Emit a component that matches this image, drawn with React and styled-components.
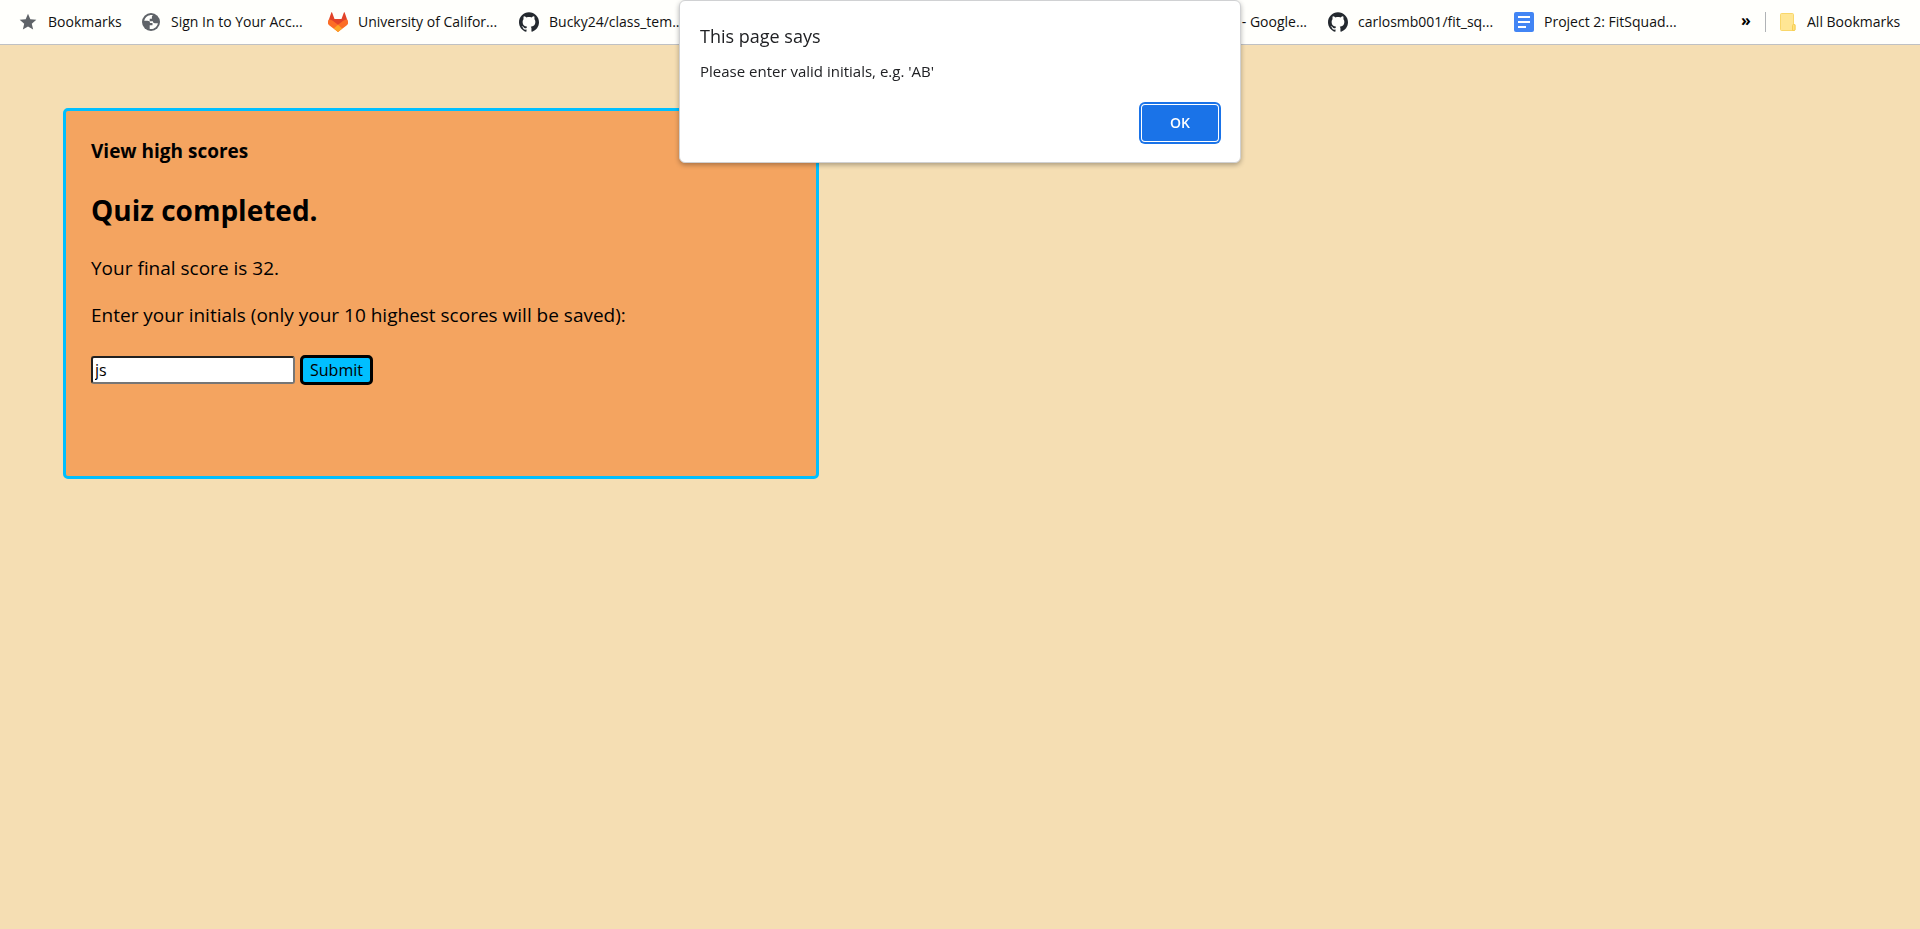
import React from 'react';
import styled, { createGlobalStyle } from 'styled-components';
import { SiGithub } from 'react-icons/si';
import { MdStar } from 'react-icons/md';

const GlobalStyle = createGlobalStyle`
  *, *::before, *::after { box-sizing: border-box; }
  body {
    margin: 0;
    background: wheat;
    color: #000;
    font-family: 'Open Sans', 'Noto Sans', sans-serif;
  }
`;

const BookmarksBar = styled.nav`
  display: flex;
  align-items: center;
  justify-content: space-between;
  height: 45px;
  padding: 0 18px;
  background: #fffffc;
  border-bottom: 1px solid #bfc1c4;
`;

const Group = styled.div`
  display: flex;
  align-items: center;
  gap: 21px;
`;

const Bookmark = styled.a`
  display: flex;
  flex: none;
  align-items: center;
  gap: 10px;
  width: ${(p) => p.$width}px;
  height: 24px;
  color: #111;
  font-size: 14px;
  line-height: 20px;
  text-decoration: none;
  white-space: nowrap;
  justify-content: ${(p) => (p.$end ? 'flex-end' : 'flex-start')};

  svg {
    flex: none;
    display: block;
  }
`;

const Overflow = styled.button`
  width: 20px;
  margin-left: 38px;
  padding: 0 0 4px;
  border: 0;
  background: none;
  color: #000;
  font: 700 16px/20px 'Open Sans', sans-serif;
`;

const Divider = styled.span`
  width: 1px;
  height: 20px;
  margin: 0 -8px 0 -12px;
  background: #b0b3b6;
`;

const Page = styled.main`
  padding: 63px 15px;
`;

const Card = styled.section`
  width: 40%;
  min-width: 600px;
  min-height: 371px;
  margin-left: 48px;
  padding: 27px 25px 25px;
  background: sandybrown;
  border: 3px solid deepskyblue;
  border-radius: 5px;
  font-size: 19px;
  line-height: 27px;
`;

const ScoresLink = styled.a`
  display: block;
  color: #000;
  font-weight: 700;
  text-decoration: none;
`;

const Heading = styled.h2`
  margin: 25px 0;
  font-size: 28px;
  line-height: 40px;
`;

const Text = styled.p`
  margin: 0 0 20px;
`;

const Entry = styled.form`
  display: flex;
  flex-wrap: wrap;
  align-items: center;
  gap: 5px;
`;

const Prompt = styled.label`
  width: 100%;
  margin-bottom: 21px;
`;

const InitialsInput = styled.input`
  width: 204px;
  height: 28px;
  padding: 1px 2px;
  background: #fff;
  border: 2px inset #767676;
  border-radius: 3px;
  color: #000;
  font: 16px/22px 'Open Sans', sans-serif;
  outline: none;
`;

const SubmitButton = styled.button`
  width: 73px;
  height: 30px;
  padding: 0;
  background: deepskyblue;
  border: 3px solid #000;
  border-radius: 5px;
  color: #000;
  font: 16px/24px 'Open Sans', sans-serif;
`;

const Alert = styled.div`
  position: fixed;
  top: 0;
  left: 50%;
  width: 562px;
  padding: 22px 20px 21px;
  transform: translateX(-50%);
  background: #fff;
  border: 1px solid #d0d1d3;
  border-radius: 6px;
  box-shadow: 0 2px 5px rgba(0, 0, 0, 0.3);
  color: #202124;
`;

const AlertTitle = styled.h1`
  margin: 0 0 11px;
  font-size: 18px;
  font-weight: 400;
  line-height: 26px;
`;

const AlertMessage = styled.p`
  margin: 0 0 23px;
  font-size: 15px;
  line-height: 22px;
`;

const AlertActions = styled.div`
  display: flex;
  justify-content: flex-end;
`;

const OkButton = styled.button`
  width: 76px;
  height: 36px;
  margin-right: 2px;
  padding: 0;
  background: #1a73e8;
  border: 0;
  border-radius: 3px;
  box-shadow: 0 0 0 1px #fff, 0 0 0 3px #1a73e8;
  color: #fff;
  font: 600 14px/20px 'Open Sans', sans-serif;
`;

const GlobeIcon = () => (
  <svg width="20" height="20" viewBox="0 0 20 20" aria-hidden="true">
    <circle cx="10" cy="10" r="9" fill="#5f6368" />
    <path
      fill="#fffffc"
      d="M9 3.2c-2.800.4-5.200 2.600-5.800 5.500h3.300c1.600 0 2.500.9 2.500 2.200h2.500v2.400H8.700v3.600c3.900.7 7.600-1.900 8.200-5.700h-3.100c-1.200 0-1.900-.8-1.900-2H8.700V6.700h2.200V4.800c0-.7.500-1.200 1.100-1.300-.9-.3-2-.5-3-.3z"
    />
  </svg>
);

const GitlabIcon = () => (
  <svg width="20" height="20" viewBox="0 0 20 20" aria-hidden="true">
    <path fill="#e24329" d="M3.300.5 1 7.300 0 11l10 8.500L20 11l-1-3.700L16.700.5c-.1-.4-.6-.4-.8 0L13.500 7h-7L4.100.5c-.1-.4-.700-.4-.8 0z" />
    <path fill="#fc6d26" d="M0 11.200c-.1-1.500.2-2.800 1-3.900 2 .4 3.700 1.300 5.400 2.600l3.600 2.800 3.600-2.800C15.300 8.600 17 7.700 19 7.300c.8 1.100 1.100 2.400 1 3.900-.1 1-.7 1.700-1.500 2.300L10 20l-8.500-6.500C.7 12.900.1 12.200 0 11.200z" />
    <path fill="#fca326" d="m5.800 16.400 4.200-3.700 4.200 3.700L10 20z" />
  </svg>
);

const DocsIcon = () => (
  <svg width="20" height="20" viewBox="0 0 20 20" aria-hidden="true">
    <rect width="20" height="20" rx="2" fill="#4285f4" />
    <path fill="#fff" d="M4 4h12v2H4zM4 9h12v2H4zM4 14h8v2H4z" />
  </svg>
);

const FolderIcon = () => (
  <svg width="18" height="20" viewBox="0 0 18 20" aria-hidden="true">
    <path fill="#ffe694" stroke="#f9d76a" d="M2.500 1.500h11c.6 0 1 .4 1 1v10h1.500v5c0 .6-.4 1-1 1H2.500c-.6 0-1-.4-1-1v-15c0-.6.4-1 1-1z" />
    <path fill="#ffe07d" stroke="#f7cf52" d="M13.500 13.500c0-.6.400-1 1-1s1.500.4 1.500 1v4c0 .6-.4 1-1 1h-1.500z" />
  </svg>
);

const GithubIcon = () => <SiGithub size={20} color="#24292f" aria-hidden="true" />;
const StarIcon = () => <MdStar size={20} color="#5f6368" aria-hidden="true" />;

const leftBookmarks = [
  { label: 'Bookmarks', width: 102, Icon: StarIcon },
  { label: 'Sign In to Your Acc...', width: 166, Icon: GlobeIcon },
  { label: 'University of Califor...', width: 170, Icon: GitlabIcon },
  { label: 'Bucky24/class_tem...', width: 170, Icon: GithubIcon },
];

const rightBookmarks = [
  { label: '- Google...', width: 80, end: true },
  { label: 'carlosmb001/fit_sq...', width: 165, Icon: GithubIcon },
  { label: 'Project 2: FitSquad...', width: 163, Icon: DocsIcon },
];

const BookmarkItem = ({ label, width, end, Icon }) => (
  <Bookmark href="#" $width={width} $end={end}>
    {Icon && <Icon />}
    {label}
  </Bookmark>
);

export default function App() {
  return (
    <>
      <GlobalStyle />
      <BookmarksBar aria-label="Bookmarks">
        <Group>
          {leftBookmarks.map((b) => (
            <BookmarkItem key={b.label} {...b} />
          ))}
        </Group>
        <Group>
          {rightBookmarks.map((b) => (
            <BookmarkItem key={b.label} {...b} />
          ))}
          <Overflow type="button" aria-label="More bookmarks">»</Overflow>
          <Divider />
          <BookmarkItem label="All Bookmarks" width={123} Icon={FolderIcon} />
        </Group>
      </BookmarksBar>
      <Page>
        <Card>
          <ScoresLink href="#">View high scores</ScoresLink>
          <Heading>Quiz completed.</Heading>
          <Text>Your final score is 32.</Text>
          <Entry onSubmit={(e) => e.preventDefault()}>
            <Prompt htmlFor="initials">
              Enter your initials (only your 10 highest scores will be saved):
            </Prompt>
            <InitialsInput id="initials" type="text" defaultValue="js" />
            <SubmitButton type="submit">Submit</SubmitButton>
          </Entry>
        </Card>
      </Page>
      <Alert role="alertdialog" aria-labelledby="alert-title" aria-describedby="alert-message">
        <AlertTitle id="alert-title">This page says</AlertTitle>
        <AlertMessage id="alert-message">Please enter valid initials, e.g. 'AB'</AlertMessage>
        <AlertActions>
          <OkButton type="button">OK</OkButton>
        </AlertActions>
      </Alert>
    </>
  );
}
